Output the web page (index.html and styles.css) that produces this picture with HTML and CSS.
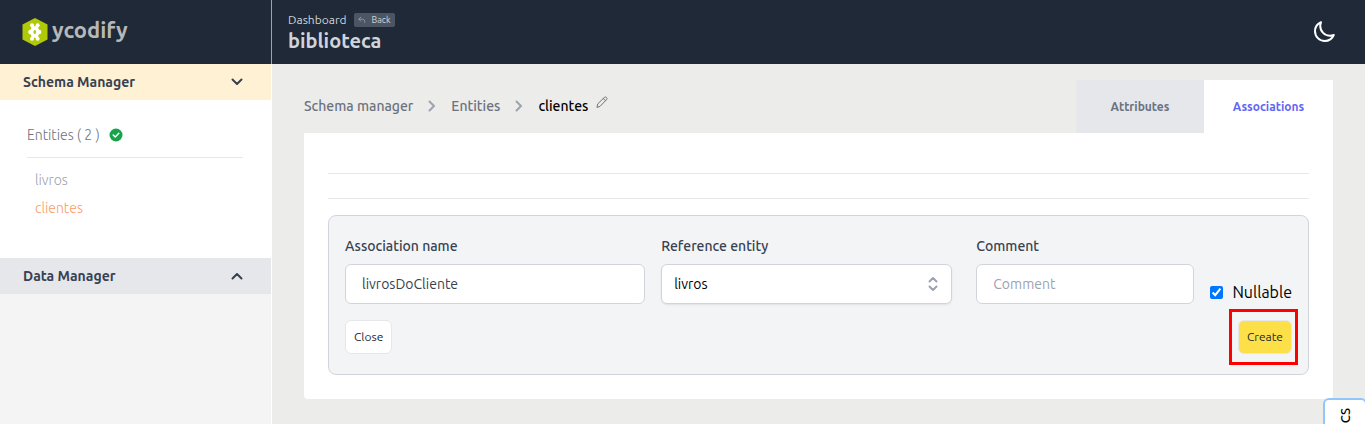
FILE: index.html
```html
<!DOCTYPE html>
<html lang="en">
<head>
<meta charset="utf-8">
<meta name="viewport" content="width=device-width, initial-scale=1">
<title>ycodify - biblioteca</title>
<link rel="stylesheet" href="styles.css">
</head>
<body>
<div class="app">
  <aside class="sidebar">
    <a class="brand" href="#" aria-label="ycodify">
      <svg class="brand-mark" viewBox="0 0 26 28" aria-hidden="true">
        <path fill="#b0ca08" d="M13 0 25.500 6.500v15L13 28 .5 21.500v-15z"/>
        <g fill="#fff"><circle cx="10" cy="7.300" r="2"/><circle cx="15.600" cy="7.300" r="2"/><circle cx="8.400" cy="14" r="2.200"/><circle cx="17.200" cy="14" r="2.200"/><circle cx="10" cy="20.700" r="2"/><circle cx="15.600" cy="20.700" r="2"/><path d="M10 7l2.800 1.500L15.600 7l1 4 2 3-2 3-1 4-2.800-1.500L10 21l-1-4-2-3 2-3z"/></g>
        <ellipse cx="12.800" cy="14" rx="1.300" ry="2" fill="#b0ca08"/>
      </svg>
      <span class="brand-name">ycodify</span>
    </a>
    <button class="section section-open" type="button" aria-expanded="true">Schema Manager
      <svg class="chevron" viewBox="0 0 12 12" aria-hidden="true"><path d="m1.500 3.500 4.500 4.500 4.500-4.500"/></svg>
    </button>
    <div class="section-body">
      <div class="entities-title">Entities ( 2 )
        <svg class="check" viewBox="0 0 14 14" aria-hidden="true"><circle cx="7" cy="7" r="6.500" fill="#16a34a"/><path d="m4.200 7 2 2 3.600-3.800" fill="none" stroke="#fff" stroke-width="1.500" stroke-linecap="round" stroke-linejoin="round"/></svg>
      </div>
      <nav class="entities">
        <a href="#">livros</a>
        <a class="current" href="#">clientes</a>
      </nav>
    </div>
    <button class="section" type="button" aria-expanded="false">Data Manager
      <svg class="chevron" viewBox="0 0 12 12" aria-hidden="true"><path d="m1.500 8.500 4.500-4.500 4.500 4.500"/></svg>
    </button>
  </aside>

  <div class="content">
    <header class="topbar">
      <div>
        <div class="topbar-path">Dashboard
          <button class="back" type="button"><svg viewBox="0 0 10 10" aria-hidden="true"><path d="M3.500 1.500 1 4l2.500 2.500M1 4h5c1.500 0 2.500 1.500 2.500 4"/></svg>Back</button>
        </div>
        <h1>biblioteca</h1>
      </div>
      <button class="theme" type="button" aria-label="Dark mode">
        <svg viewBox="0 0 24 24" aria-hidden="true"><path d="M21.750 15A9.700 9.700 0 0 1 18 15.750C12.600 15.750 8.250 11.400 8.250 6c0-1.330.27-2.600.75-3.750A9.750 9.750 0 0 0 3 11.250C3 16.600 7.400 21 12.750 21a9.750 9.750 0 0 0 9-6z"/></svg>
      </button>
    </header>

    <main>
      <div class="heading">
        <nav class="crumbs" aria-label="Breadcrumb">
          <a href="#">Schema manager</a>
          <svg viewBox="0 0 12 12" aria-hidden="true"><path d="m3.500 1.500 4.500 4.500-4.500 4.500"/></svg>
          <a href="#">Entities</a>
          <svg viewBox="0 0 12 12" aria-hidden="true"><path d="m3.500 1.500 4.500 4.500-4.500 4.500"/></svg>
          <span class="here">clientes</span>
          <button class="edit" type="button" aria-label="Edit"><svg viewBox="0 0 12 12" aria-hidden="true"><path d="M1 11l.8-3.200 6.500-6.300a1.500 1.500 0 0 1 2.200 2.200L4.200 10.200zM7.300 2.500l2.200 2.200"/></svg></button>
        </nav>
        <div class="tabs">
          <button class="tab" type="button">Attributes</button>
          <button class="tab tab-active" type="button">Associations</button>
        </div>
      </div>
      <section class="panel">
        <hr>
        <hr>
        <form class="card">
          <div class="fields">
            <div class="field">
              <label for="name">Association name</label>
              <input id="name" class="control" type="text" value="livrosDoCliente">
            </div>
            <div class="field field-select">
              <label for="entity">Reference entity</label>
              <div class="select">
                <select id="entity" class="control"><option>livros</option><option>clientes</option></select>
                <svg viewBox="0 0 10 16" aria-hidden="true"><path d="m1.500 5.500L5 2l3.500 3.500M1.500 10.500 5 14l3.500-3.500"/></svg>
              </div>
            </div>
            <div class="field">
              <label for="comment">Comment</label>
              <input id="comment" class="control" type="text" placeholder="Comment">
            </div>
            <label class="nullable"><input type="checkbox" checked>Nullable</label>
          </div>
          <div class="actions">
            <button class="btn" type="button">Close</button>
            <button class="btn btn-create" type="button">Create</button>
          </div>
        </form>
      </section>
    </main>
  </div>
</div>
<button class="docs" type="button">CS</button>
</body>
</html>
```
FILE: styles.css
```css
* { box-sizing: border-box; }
body {
  margin: 0;
  font-family: Ubuntu, "Noto Sans", sans-serif;
  font-size: 14px;
  line-height: 20px;
  color: #374151;
  background: #ececea;
}
button, input, select { font: inherit; color: inherit; margin: 0; }
button { border: 0; padding: 0; background: none; cursor: pointer; }
a { color: inherit; text-decoration: none; }
svg { display: block; flex: none; fill: none; stroke-linecap: round; stroke-linejoin: round; }

.app { display: flex; min-height: 100vh; }
.sidebar {
  flex: none;
  width: 272px;
  display: flex;
  flex-direction: column;
  background: #f4f4f4;
  border-right: 1px solid #fff;
}
.brand {
  display: flex;
  align-items: center;
  gap: 4px;
  height: 64px;
  margin-right: -1px;
  padding-left: 22px;
  background: #1f2937;
  border-right: 1px solid #9ca3af;
}
.brand-mark { width: 26px; height: 28px; }
.brand-name { font-size: 22px; line-height: 28px; padding-bottom: 4px; font-weight: 700; font-family: Ubuntu, "Open Sans", sans-serif; color: #b8b8b8; }
.section {
  display: flex;
  align-items: center;
  justify-content: space-between;
  padding: 8px 28px 8px 23px;
  background: #e5e7eb;
  font-weight: 700;
  text-align: left;
}
.section-open { background: #fff1d4; }
.chevron { width: 12px; height: 12px; stroke: #374151; stroke-width: 2; }
.section-body { padding: 24px 28px 36px 27px; background: #fff; }
.entities-title {
  display: flex;
  align-items: center;
  gap: 9px;
  padding: 1px 0 12px;
  border-bottom: 1px solid #e5e7eb;
  color: #6b7280;
  font-weight: 300;
}
.check { width: 14px; height: 14px; }
.entities { display: flex; flex-direction: column; gap: 8px; padding: 12px 8px 4px; font-weight: 300; color: #9ca3af; }
.entities .current { color: #fb9a66; }

.content { flex: 1; min-width: 0; }
.topbar {
  display: flex;
  align-items: center;
  justify-content: space-between;
  height: 64px;
  padding: 0 29px 0 16px;
  background: #1f2937;
  color: #d1d5db;
}
.topbar-path { display: flex; align-items: center; gap: 8px; font-size: 12px; }
.back {
  display: flex;
  align-items: center;
  gap: 5px;
  padding: 0 4px;
  border-radius: 2px;
  background: #4b5563;
  font-size: 9px;
  line-height: 14px;
}
.back svg { width: 8px; height: 8px; stroke: #9ca3af; }
h1 { margin: 0; font-size: 20px; line-height: 22px; padding-bottom: 2px; font-weight: 700; }
.theme svg { width: 24px; height: 24px; stroke: #fff; stroke-width: 2; }

main { padding: 16px 32px 24px; }
.heading { display: flex; justify-content: space-between; }
.crumbs { display: flex; align-items: center; gap: 13px; padding-bottom: 2px; color: #6b7280; font-weight: 500; }
.crumbs svg { width: 12px; height: 12px; stroke: #9ca3af; stroke-width: 2; }
.here { color: #000; }
.edit { align-self: flex-start; margin: 16px 0 0 -5px; }
.crumbs .edit svg { stroke: #6b7280; stroke-width: 1; }
.tabs { display: flex; }
.tab { width: 128px; padding: 17px 0 16px; background: #e5e7eb; color: #6b7280; font-size: 12px; font-weight: 600; }
.tab-active { width: 129px; background: #fff; color: #6366f1; }

.panel { padding: 40px 24px 24px; background: #fff; border-radius: 0 0 4px 4px; }
hr { margin: 0 0 24px; border: 0; border-top: 1px solid #e5e7eb; }
hr + hr { margin-bottom: 16px; }
.card { padding: 20px 16px; background: #f3f4f6; border: 1px solid #d1d5db; border-radius: 8px; }
.fields { display: grid; grid-template-columns: 300fr 299fr 218fr auto; gap: 16px; }
.field { display: flex; flex-direction: column; gap: 8px; min-width: 0; font-weight: 500; }
.field-select { padding-right: 8px; }
.control {
  width: 100%;
  height: 40px;
  padding: 0 16px;
  border: 1px solid #d1d5db;
  border-radius: 6px;
  background: #fff;
  font-weight: 400;
}
.control::placeholder { color: #9ca3af; }
.select { display: grid; align-items: center; }
.select > * { grid-area: 1 / 1; }
.select svg { justify-self: end; width: 10px; height: 16px; margin-right: 14px; stroke: #9ca3af; stroke-width: 2; pointer-events: none; z-index: 1; }
select.control { appearance: none; padding: 0 12px; color: #000; box-shadow: 0 1px 2px rgba(0, 0, 0, .08); }
.nullable { display: flex; align-items: center; align-self: end; gap: 9px; height: 24px; font-size: 16px; color: #000; }
.nullable input { width: 13px; height: 13px; accent-color: #0075ff; }
.actions { display: flex; justify-content: space-between; padding-top: 16px; }
.btn {
  position: relative;
  padding: 6px 8px;
  border: 1px solid #e5e7eb;
  border-radius: 6px;
  background: #fff;
  color: #1f2937;
  font-size: 12px;
}
.btn-create { background: #fde047; }
.btn-create::after { content: ""; position: absolute; inset: -12px -7px -12px -10px; border: 3px solid #f00; }

.docs {
  position: fixed;
  top: 398px;
  right: -2px;
  width: 44px;
  padding: 8px 0;
  border: 2px solid #93c5fd;
  border-radius: 6px;
  background: #fff;
  color: #000;
  font-size: 13px;
  font-weight: 500;
  writing-mode: sideways-lr;
}
```
